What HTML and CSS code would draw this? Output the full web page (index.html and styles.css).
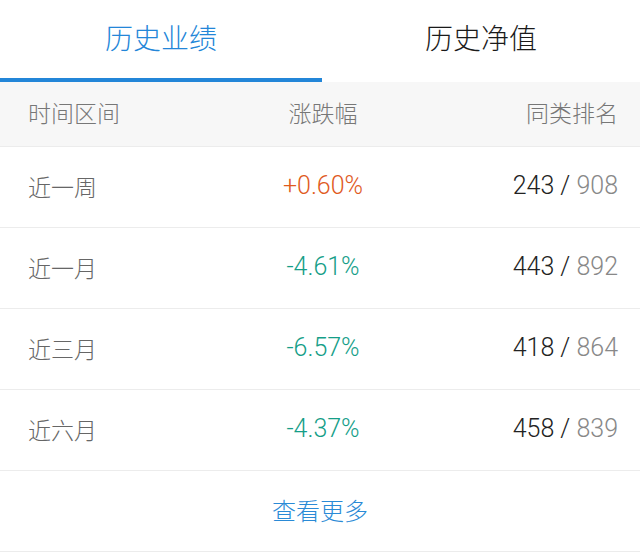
FILE: index.html
```html
<!DOCTYPE html>
<html lang="zh-CN">
<head>
<meta charset="utf-8">
<link rel="stylesheet" href="styles.css">
</head>
<body>
<div class="page">
  <div class="tabs">
    <div class="tab active">历史业绩</div>
    <div class="tab">历史净值</div>
  </div>
  <div class="row head">
    <div class="c1">时间区间</div>
    <div class="c2">涨跌幅</div>
    <div class="c3">同类排名</div>
  </div>
  <div class="row">
    <div class="c1">近一周</div>
    <div class="c2 num up">+0.60%</div>
    <div class="c3 num"><span class="rank">243 /</span> <span class="total">908</span></div>
  </div>
  <div class="row">
    <div class="c1">近一月</div>
    <div class="c2 num down">-4.61%</div>
    <div class="c3 num"><span class="rank">443 /</span> <span class="total">892</span></div>
  </div>
  <div class="row">
    <div class="c1">近三月</div>
    <div class="c2 num down">-6.57%</div>
    <div class="c3 num"><span class="rank">418 /</span> <span class="total">864</span></div>
  </div>
  <div class="row">
    <div class="c1">近六月</div>
    <div class="c2 num down">-4.37%</div>
    <div class="c3 num"><span class="rank">458 /</span> <span class="total">839</span></div>
  </div>
  <div class="more">查看更多</div>
</div>
</body>
</html>
```
FILE: styles.css
```css
* { box-sizing: border-box; }
html, body { margin: 0; padding: 0; background: #fff; }
body {
  font-family: Roboto, "Noto Sans CJK SC", sans-serif;
  font-weight: 300;
  width: 640px;
  height: 554px;
  overflow: hidden;
}
.tabs {
  display: flex;
  height: 82px;
}
.tab {
  flex: 1;
  display: flex;
  align-items: center;
  justify-content: center;
  font-size: 28px;
  font-weight: 300;
  color: #1a1a1a;
  padding-bottom: 4px;
  border-bottom: 4px solid transparent;
}
.tab.active {
  flex: 0 0 322px;
  color: #2386d8;
  border-bottom-color: #2386d8;
}
.row {
  display: grid;
  grid-template-columns: 1fr 1fr 1fr;
  align-items: center;
  height: 81px;
  padding: 0 22px 3px 28px;
  border-bottom: 1px solid #ececec;
  font-size: 23px;
  color: #666;
}
.row.head {
  height: 65px;
  background: #f7f7f7;
  padding-bottom: 5px;
  color: #777;
}
.c1 { text-align: left; }
.c2 { text-align: center; }
.c3 { text-align: right; }
.num { font-size: 25px; font-weight: 300; }
.up { color: #e05a1e; }
.down { color: #159e88; }
.rank { color: #222; }
.total { color: #888; }
.more {
  height: 81px;
  display: flex;
  align-items: center;
  justify-content: center;
  padding-bottom: 3px;
  font-size: 24px;
  color: #2a8ad6;
  border-bottom: 1px solid #ececec;
}
```
